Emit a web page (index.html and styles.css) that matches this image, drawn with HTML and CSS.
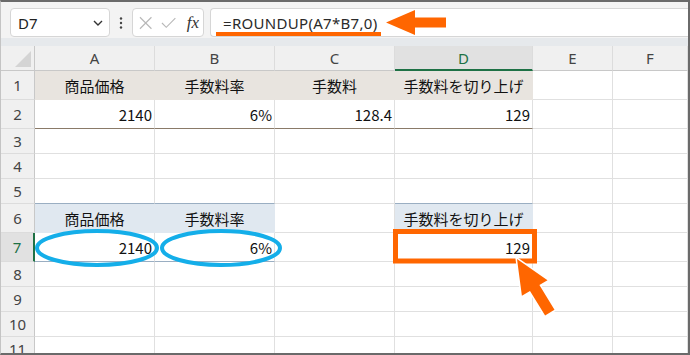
FILE: index.html
```html
<!DOCTYPE html>
<html lang="ja">
<head>
    <meta charset="UTF-8">
    <title>ROUNDUP</title>
    <link rel="stylesheet" href="styles.css">
</head>
<body>
    <div class="window">
        <div class="toolbar">
            <div class="namebox">
                <span>D7</span>
                <svg class="chevron" width="10" height="6" viewBox="0 0 10 6"><path d="M1 1 L5 5 L9 1" fill="none" stroke="#333" stroke-width="1.4"/></svg>
            </div>
            <div class="dots">
                <svg width="4" height="12" viewBox="0 0 4 12"><circle cx="2" cy="1.5" r="1.2" fill="#444"/><circle cx="2" cy="6" r="1.2" fill="#444"/><circle cx="2" cy="10.5" r="1.2" fill="#444"/></svg>
            </div>
            <div class="fxbox">
                <svg width="14" height="14" viewBox="0 0 14 14"><path d="M1 1 L13 13 M13 1 L1 13" stroke="#b8b8b8" stroke-width="1.2"/></svg>
                <svg width="16" height="12" viewBox="0 0 16 12"><path d="M1 6 L5.5 10.5 L15 1" fill="none" stroke="#b8b8b8" stroke-width="1.2"/></svg>
                <i class="fx">fx</i>
            </div>
            <div class="formula">
                <span class="formula-text">=ROUNDUP(A7*B7,0)</span>
            </div>
        </div>
        <div class="band"></div>

        <div class="sheet">
            <!-- column headers -->
            <div class="corner"><span class="tri"></span></div>
            <div class="colhead">A</div>
            <div class="colhead">B</div>
            <div class="colhead">C</div>
            <div class="colhead active">D</div>
            <div class="colhead">E</div>
            <div class="colhead">F</div>

            <!-- 1 -->
            <div class="rowhead">1</div>
            <div class="cell head-beige">商品価格</div>
            <div class="cell head-beige">手数料率</div>
            <div class="cell head-beige">手数料</div>
            <div class="cell head-beige">手数料を切り上げ</div>
            <div class="cell"></div>
            <div class="cell"></div>

            <!-- 2 -->
            <div class="rowhead">2</div>
            <div class="cell num line-brown">2140</div>
            <div class="cell num line-brown">6%</div>
            <div class="cell num line-brown">128.4</div>
            <div class="cell num line-brown">129</div>
            <div class="cell"></div>
            <div class="cell"></div>

            <!-- 3 -->
            <div class="rowhead">3</div>
            <div class="cell"></div><div class="cell"></div><div class="cell"></div><div class="cell"></div><div class="cell"></div><div class="cell"></div>
            <!-- 4 -->
            <div class="rowhead">4</div>
            <div class="cell"></div><div class="cell"></div><div class="cell"></div><div class="cell"></div><div class="cell"></div><div class="cell"></div>
            <!-- 5 -->
            <div class="rowhead">5</div>
            <div class="cell line-blue"></div><div class="cell line-blue"></div><div class="cell"></div><div class="cell line-blue"></div><div class="cell"></div><div class="cell"></div>

            <!-- 6 -->
            <div class="rowhead">6</div>
            <div class="cell head-blue">商品価格</div>
            <div class="cell head-blue">手数料率</div>
            <div class="cell"></div>
            <div class="cell head-blue">手数料を切り上げ</div>
            <div class="cell"></div>
            <div class="cell"></div>

            <!-- 7 -->
            <div class="rowhead active">7</div>
            <div class="cell num line-blue">2140</div>
            <div class="cell num line-blue">6%</div>
            <div class="cell"></div>
            <div class="cell num">129</div>
            <div class="cell"></div>
            <div class="cell"></div>

            <!-- 8-11 -->
            <div class="rowhead">8</div>
            <div class="cell"></div><div class="cell"></div><div class="cell"></div><div class="cell"></div><div class="cell"></div><div class="cell"></div>
            <div class="rowhead">9</div>
            <div class="cell"></div><div class="cell"></div><div class="cell"></div><div class="cell"></div><div class="cell"></div><div class="cell"></div>
            <div class="rowhead">10</div>
            <div class="cell"></div><div class="cell"></div><div class="cell"></div><div class="cell"></div><div class="cell"></div><div class="cell"></div>
            <div class="rowhead">11</div>
            <div class="cell"></div><div class="cell"></div><div class="cell"></div><div class="cell"></div><div class="cell"></div><div class="cell"></div>
        </div>

        <!-- annotations drawn over the sheet -->
        <svg class="marks" width="690" height="355" viewBox="0 0 690 355">
            <rect x="216" y="32" width="165" height="4" fill="#ff6600"/>
            <polygon points="386,22.5 415,10 415,17.5 446,17.5 446,27.5 415,27.5 415,35" fill="#ff6600"/>
            <ellipse cx="97" cy="248" rx="60" ry="17" fill="none" stroke="#14aee9" stroke-width="4"/>
            <ellipse cx="221" cy="248" rx="59" ry="17" fill="none" stroke="#14aee9" stroke-width="4"/>
            <rect x="395.5" y="231.5" width="139" height="29.5" fill="none" stroke="#ff6600" stroke-width="5"/>
            <polygon points="517,259 547.5,280.2 539.4,285.1 554.5,309.8 545.1,315.6 530,290.9 521.9,295.8" fill="#ff6600" stroke="#fff" stroke-width="3" paint-order="stroke" stroke-linejoin="miter"/>
        </svg>
    </div>
</body>
</html>
```

FILE: styles.css
```css
:root {
    --grid-line: #e0e0e0;
    --head-bg: #f0f0f0;
    --head-line: #c8c8c8;
    --green: #1e7145;
    --orange: #ff6600;
}

* {
    box-sizing: border-box;
    margin: 0;
    padding: 0;
}

body {
    background: #fff;
    font-family: "Noto Sans", "Noto Sans CJK JP", sans-serif;
    color: #111;
}

.window {
    position: relative;
    width: 690px;
    height: 355px;
    overflow: hidden;
    border-top: 2px solid #6a6a6a;
    border-right: 2px solid #6a6a6a;
    border-bottom: 2px solid #6a6a6a;
    border-left: 1px solid #c4c4c4;
    background: #fff;
}

.toolbar {
    height: 36px;
    background: #f3f3f3;
    display: flex;
    align-items: flex-start;
    padding: 6px 0 0 9px;
}

.namebox,
.fxbox,
.formula {
    height: 29px;
    background: #fff;
    border: 1px solid #d6d6d6;
    border-radius: 4px;
    display: flex;
    align-items: center;
}

.namebox {
    width: 100px;
    padding: 0 6px 0 7px;
    justify-content: space-between;
    font-size: 15px;
    color: #222;
}

.dots {
    width: 22px;
    height: 29px;
    display: flex;
    align-items: center;
    justify-content: center;
}

.fxbox {
    width: 72px;
    padding: 0 4px 0 6px;
    gap: 9px;
}

.fx {
    font-family: "Liberation Serif", serif;
    font-size: 17px;
    color: #333;
    margin-left: 1px;
}

.formula {
    flex: 1;
    margin-left: 6px;
    border-right: none;
    border-radius: 4px 0 0 4px;
    padding-left: 12px;
}

.formula-text {
    font-size: 15px;
    color: #2a2a2a;
    letter-spacing: 0.3px;
}

.band {
    height: 8px;
    background: #e6e9ec;
}

.sheet {
    display: grid;
    grid-template-columns: 34px 120px 120px 120px 138px 80px 1fr;
    grid-template-rows: 25px 29px 29px 25px 25px 25px 29px 29px 25px 25px 25px 25px;
    font-family: "Noto Sans CJK JP", sans-serif;
    font-size: 15px;
}

.corner {
    position: relative;
    background: var(--head-bg);
    border-right: 1px solid var(--head-line);
    border-bottom: 1px solid var(--head-line);
}

.tri {
    position: absolute;
    right: 3px;
    bottom: 3px;
    width: 0;
    height: 0;
    border-left: 16px solid transparent;
    border-bottom: 16px solid #d4d4d4;
}

.colhead {
    background: var(--head-bg);
    border-right: 1px solid #dcdcdc;
    border-bottom: 1px solid var(--head-line);
    display: flex;
    align-items: center;
    justify-content: center;
    font-family: "Noto Sans", sans-serif;
    font-size: 15px;
    color: #444;
}

.colhead.active {
    background: #e1e1e1;
    color: var(--green);
    border-bottom: 2px solid var(--green);
}

.rowhead {
    background: var(--head-bg);
    border-right: 1px solid var(--head-line);
    border-bottom: 1px solid #dcdcdc;
    display: flex;
    align-items: center;
    justify-content: center;
    font-family: "Noto Sans", sans-serif;
    color: #444;
}

.rowhead.active {
    background: #e1e1e1;
    color: var(--green);
    border-right: 2px solid var(--green);
}

.cell {
    border-right: 1px solid var(--grid-line);
    border-bottom: 1px solid var(--grid-line);
    display: flex;
    align-items: center;
    justify-content: center;
    white-space: nowrap;
    color: #111;
}

.cell.num {
    justify-content: flex-end;
    padding-right: 2px;
}

.head-beige {
    background: #e8e4df;
    border-right-color: #e8e4df;
    border-bottom-color: #e8e4df;
}

.head-blue {
    background: #e0e8f0;
    border-right-color: #e0e8f0;
    border-bottom-color: #e0e8f0;
}

.line-brown {
    border-bottom: 1px solid #8a7a68;
}

.line-blue {
    border-bottom: 1px solid #9aaec2;
}

.marks {
    position: absolute;
    top: -2px;
    left: -1px;
    pointer-events: none;
}
```
